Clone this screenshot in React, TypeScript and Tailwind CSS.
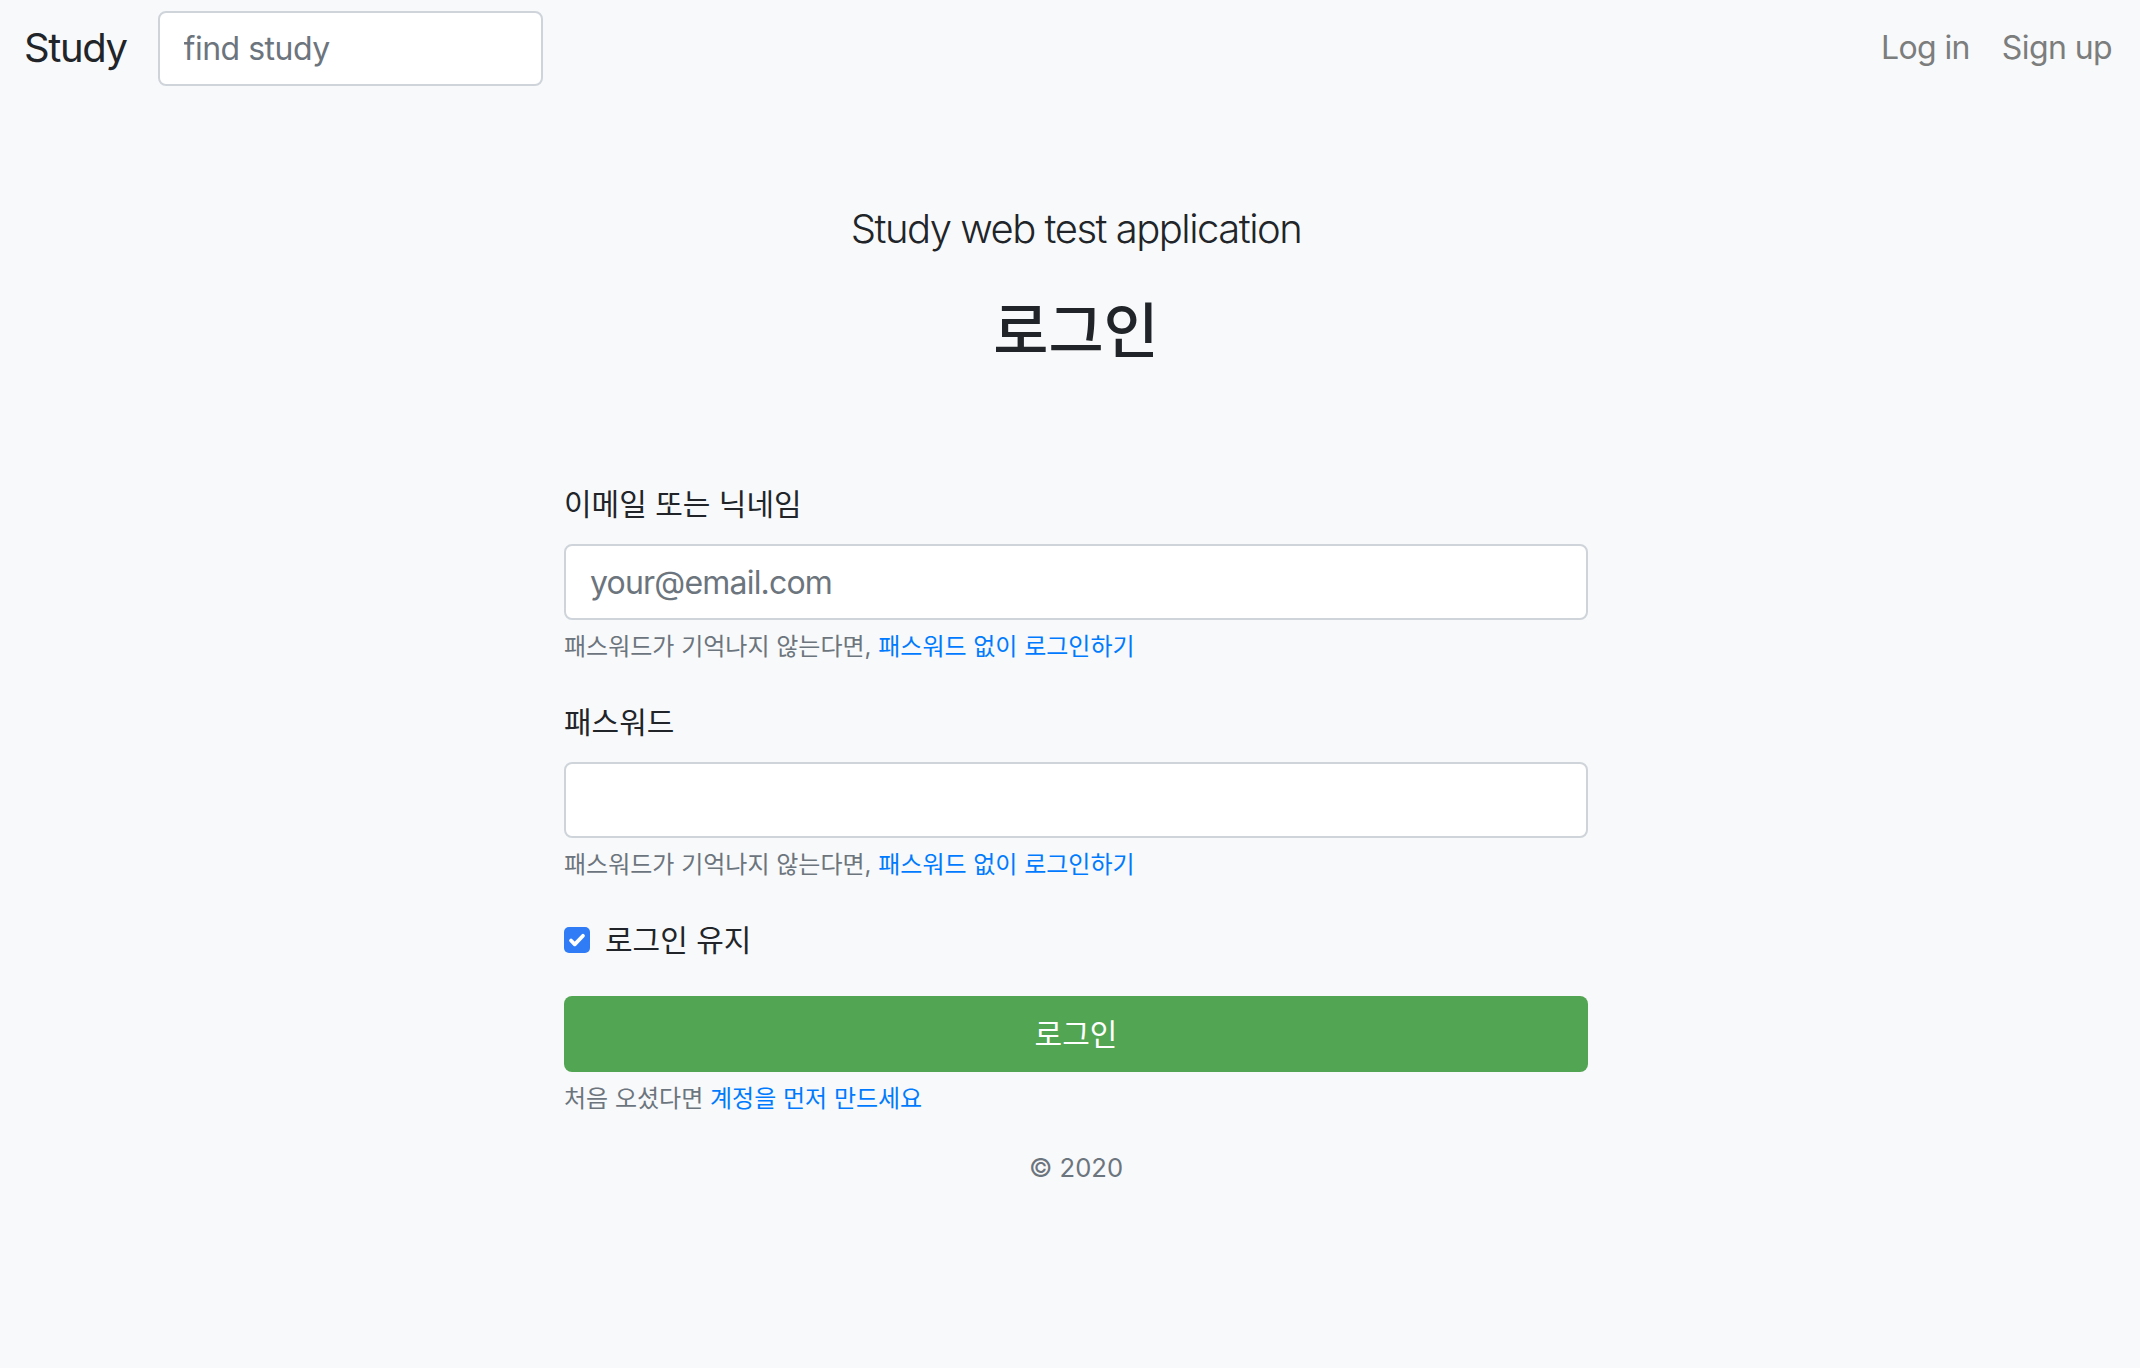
import React from 'react';

const HelpText: React.FC = () => (
  <p className="mt-[8px] text-[24px] leading-[38px] text-[#6c757d]">
    패스워드가 기억나지 않는다면,{' '}
    <a href="#" className="text-[#007bff]">
      패스워드 없이 로그인하기
    </a>
  </p>
);

const App: React.FC = () => {
  return (
    <div className="min-h-screen bg-[#f8f9fa] font-[Inter,'Noto_Sans_CJK_KR',sans-serif] text-[#212529]">
      <nav className="flex h-[96px] items-center pl-[24px] pr-[28px]">
        <a href="#" className="mr-[31px] text-[40px] leading-[60px] tracking-[-1.4px] text-[#212529]">
          Study
        </a>
        <input
          type="text"
          placeholder="find study"
          className="h-[75px] w-[385px] rounded-[8px] border-2 border-[#ced4da] bg-white px-[24px] text-[32px] tracking-[-0.5px] outline-none placeholder:text-[#6c757d]"
        />
        <div className="ml-auto flex gap-[32px] text-[32px] tracking-[-0.6px] text-[#7c7d7d]">
          <a href="#">Log in</a>
          <a href="#">Sign up</a>
        </div>
      </nav>

      <main className="flex flex-col items-center pl-[12px]">
        <p className="mt-[103px] text-[40px] font-light leading-[60px] tracking-[-1.5px]">
          Study web test application
        </p>
        <h2 className="mt-[34px] text-[60px] font-medium leading-[77px]">로그인</h2>

        <form className="mt-[110px] flex w-[1024px] flex-col">
          <label className="mb-[16px] text-[30px] leading-[48px]">이메일 또는 닉네임</label>
          <input
            type="text"
            placeholder="your@email.com"
            className="h-[76px] w-full rounded-[8px] border-2 border-[#ced4da] bg-white px-[24px] text-[32px] tracking-[-0.8px] outline-none placeholder:text-[#6c757d]"
          />
          <HelpText />

          <label className="mt-[32px] mb-[16px] text-[30px] leading-[48px]">패스워드</label>
          <input
            type="password"
            className="h-[76px] w-full rounded-[8px] border-2 border-[#ced4da] bg-white px-[24px] text-[32px] outline-none"
          />
          <HelpText />

          <div className="mt-[32px] flex h-[48px] items-center gap-[15px]">
            <span className="flex h-[26px] w-[26px] items-center justify-center rounded-[5px] bg-[#2f7cf6]">
              <svg width="20" height="20" viewBox="0 0 16 16" fill="none">
                <path d="M3.2 8.4l3 3.1L12.8 4.6" stroke="white" strokeWidth="3" strokeLinecap="round" strokeLinejoin="round" />
              </svg>
            </span>
            <span className="text-[30px] leading-[48px]">로그인 유지</span>
          </div>

          <button
            type="button"
            className="mt-[32px] h-[76px] w-full rounded-[8px] bg-[#52a552] text-[30px] text-white"
          >
            로그인
          </button>
          <p className="mt-[8px] text-[24px] leading-[38px] text-[#6c757d]">
            처음 오셨다면{' '}
            <a href="#" className="text-[#007bff]">
              계정을 먼저 만드세요
            </a>
          </p>
        </form>

        <footer className="mt-[31px] text-[25.6px] leading-[38px] text-[#6c757d]">© 2020</footer>
      </main>
    </div>
  );
};

export default App;
